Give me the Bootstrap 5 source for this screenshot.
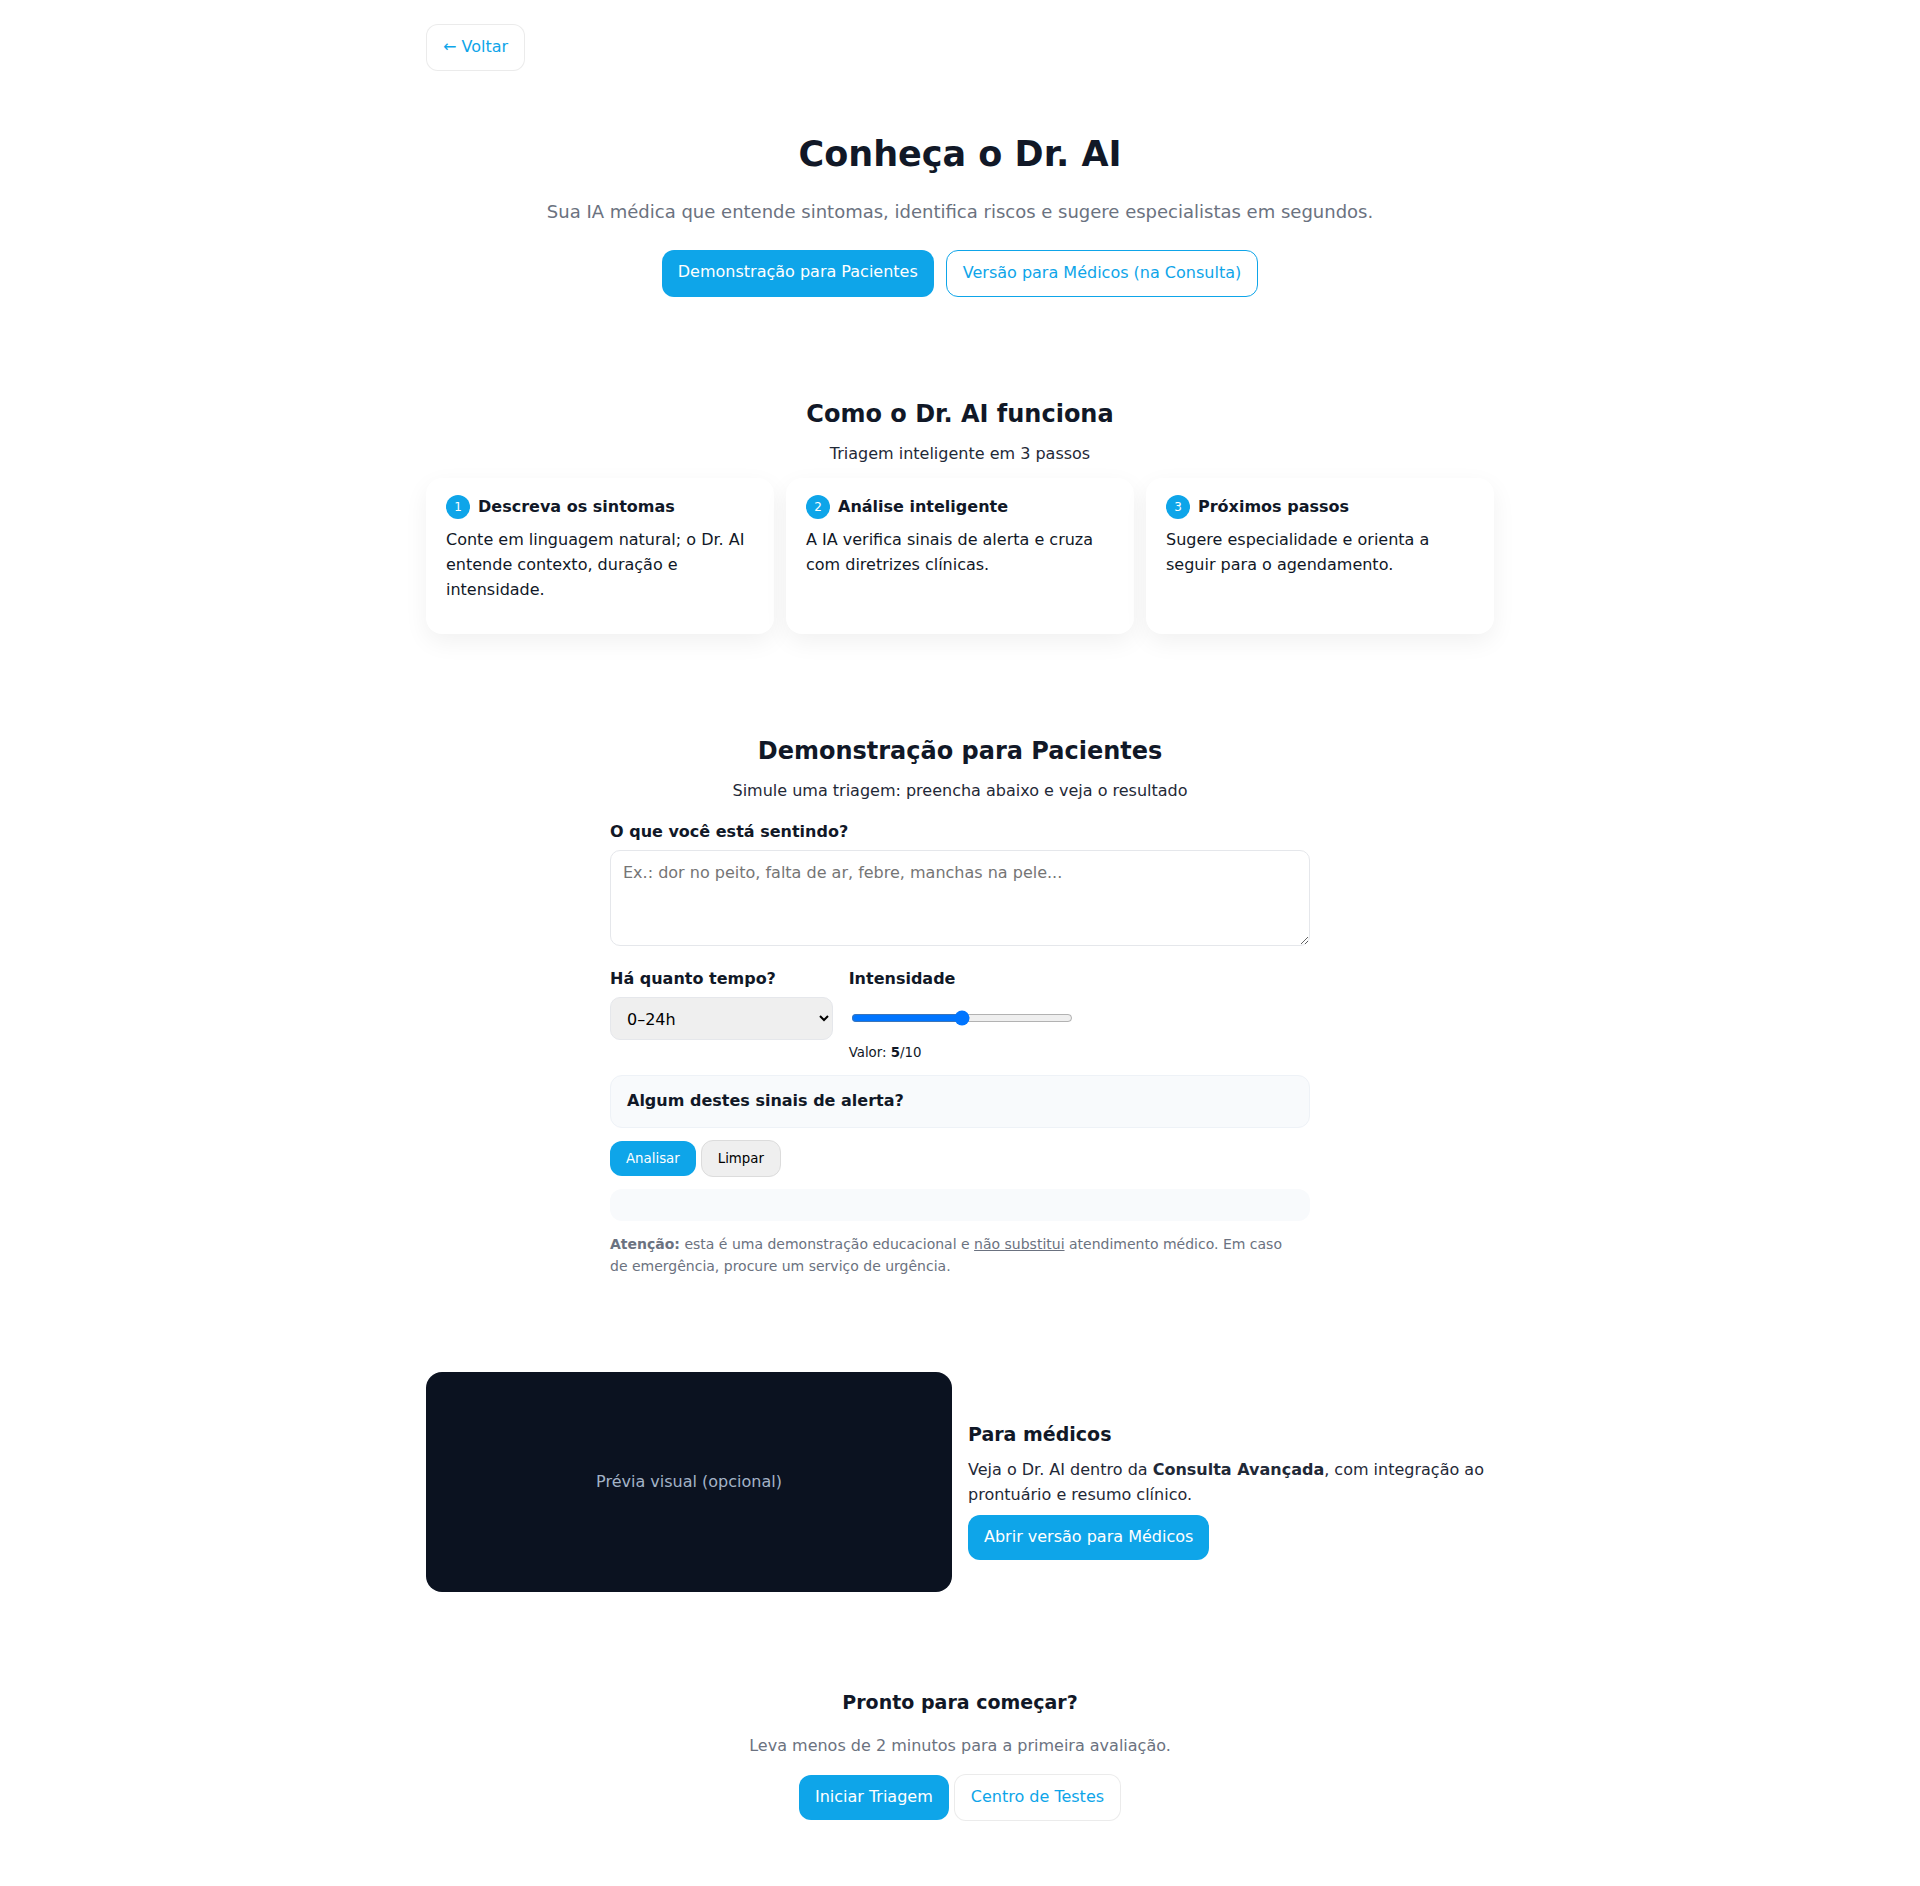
<!DOCTYPE html>
<html lang="pt-BR">
<head>
<meta charset="utf-8">
<meta name="viewport" content="width=device-width, initial-scale=1">
<title>Conheça o Dr. AI</title>
<link href="https://cdn.jsdelivr.net/npm/bootstrap@5.3.0/dist/css/bootstrap.min.css" rel="stylesheet">
<style>
:root{--brand:#0ea5e9;--ink:#111827;--muted:#6b7280;--line:#e5e7eb;--soft:#f8fafc}
body{font-family:"DejaVu Sans",sans-serif;font-size:16px;line-height:25px;color:var(--ink);background:#fff}
.page{max-width:1100px;padding:0 16px 16px}
.band{padding:48px 0}
h1{font-size:35px;line-height:55px;font-weight:700;margin:0 0 16px}
h2{font-size:24px;line-height:43px;font-weight:700;margin:0 0 5px}
h3{font-size:19px;line-height:29px;font-weight:700;margin:0 0 8px}
.tagline{font-size:18px;line-height:28px;color:var(--muted)}
.soft-text{color:#1f2937}
.section-sub{margin-bottom:12px}
.muted-text{color:var(--muted)}
.btn{--bs-btn-font-size:16px;--bs-btn-line-height:24px;--bs-btn-padding-x:16px;--bs-btn-padding-y:10px;--bs-btn-border-radius:12px;--bs-btn-font-weight:400;padding-bottom:11px}
.btn-brand{--bs-btn-color:#fff;--bs-btn-bg:var(--brand);--bs-btn-hover-color:#fff;--bs-btn-hover-bg:#0284c7;border:0}
.btn-line{--bs-btn-color:var(--brand);--bs-btn-bg:#fff;--bs-btn-border-color:rgba(0,0,0,.08)}
.btn-line-brand{--bs-btn-color:var(--brand);--bs-btn-border-color:var(--brand)}
.btn-compact{--bs-btn-font-size:smaller;--bs-btn-line-height:15px;padding-bottom:10px}
.btn-clear{--bs-btn-color:#000;--bs-btn-bg:#efefef;--bs-btn-border-color:#dcdcdc}
.btn-pair{gap:5px}
.hero-actions{gap:12px}
.step-grid{gap:12px;grid-template-columns:repeat(3,1fr)}
@media (max-width:767px){.step-grid{grid-template-columns:1fr}}
.step-card{border:0;border-radius:16px;padding:16px 20px 32px;box-shadow:0 8px 24px rgba(0,0,0,.06);color:var(--ink)}
.step-num{width:24px;height:24px;line-height:24px;border-radius:50%;background:var(--brand);color:#fff;font-size:12px}
.demo{max-width:700px;margin-top:16px}
.demo label{font-weight:700;margin-bottom:6px}
.demo .form-control,.demo .form-select{border:1px solid var(--line);border-radius:10px;color:#000}
.demo .form-control{padding:12px;height:96px;line-height:19px;margin-bottom:20px}
.demo .form-control::placeholder{color:#757575}
.demo .form-select{appearance:auto;background:#efefef;padding:11px 12px;line-height:19px;height:43px}
.demo input[type=range]{width:100%;margin:19px 2px 16px;height:16px}
.value-text{font-size:smaller;line-height:21px}
.alert-box{background:var(--soft);border:1px solid #eef2f7;border-radius:12px;padding:12px 16px 14px;margin:12px 0}
.result-box{background:var(--soft);border-radius:12px;height:32px;margin:12px 0}
.notice{font-size:14px;line-height:22px;color:var(--muted)}
.preview{background:#0b1220;border-radius:16px;height:220px;padding-bottom:2px;color:#a3b3c7}
#medicos{padding-top:47px}
</style>
</head>
<body>
<div class="container-fluid page">
  <nav class="pt-4 pb-2"><a class="btn btn-line" href="#">← Voltar</a></nav>

  <header class="band text-center">
    <h1>Conheça o Dr. AI</h1>
    <p class="tagline mb-4">Sua IA médica que entende sintomas, identifica riscos e sugere especialistas em segundos.</p>
    <div class="d-flex justify-content-center flex-wrap hero-actions">
      <a class="btn btn-brand" href="#demo">Demonstração para Pacientes</a>
      <a class="btn btn-line-brand" href="#medicos">Versão para Médicos (na Consulta)</a>
    </div>
  </header>

  <section class="band">
    <div class="text-center"><h2>Como o Dr. AI funciona</h2><p class="soft-text section-sub">Triagem inteligente em 3 passos</p></div>
    <div class="d-grid step-grid">
      <div class="card step-card"><div class="d-flex align-items-end gap-2 mb-2"><span class="step-num text-center">1</span><strong>Descreva os sintomas</strong></div><p class="mb-0">Conte em linguagem natural; o Dr. AI entende contexto, duração e intensidade.</p></div>
      <div class="card step-card"><div class="d-flex align-items-end gap-2 mb-2"><span class="step-num text-center">2</span><strong>Análise inteligente</strong></div><p class="mb-0">A IA verifica sinais de alerta e cruza com diretrizes clínicas.</p></div>
      <div class="card step-card"><div class="d-flex align-items-end gap-2 mb-2"><span class="step-num text-center">3</span><strong>Próximos passos</strong></div><p class="mb-0">Sugere especialidade e orienta a seguir para o agendamento.</p></div>
    </div>
  </section>

  <section class="band" id="demo">
    <div class="text-center"><h2>Demonstração para Pacientes</h2><p class="soft-text section-sub">Simule uma triagem: preencha abaixo e veja o resultado</p></div>
    <form class="demo mx-auto">
      <label class="d-block" for="sintomas">O que você está sentindo?</label>
      <textarea class="form-control" id="sintomas" placeholder="Ex.: dor no peito, falta de ar, febre, manchas na pele..."></textarea>
      <div class="row g-3">
        <div class="col-4"><label class="d-block" for="tempo">Há quanto tempo?</label>
          <select class="form-select" id="tempo"><option>0–24h</option><option>1–3 dias</option><option>Mais de 3 dias</option></select></div>
        <div class="col-4"><label class="d-block" for="forca">Intensidade</label>
          <input class="d-block" type="range" id="forca" min="0" max="10" value="5">
          <div class="value-text">Valor: <b>5</b>/10</div></div>
      </div>
      <div class="alert-box"><strong>Algum destes sinais de alerta?</strong></div>
      <div class="d-flex align-items-center btn-pair">
        <button class="btn btn-brand btn-compact" type="button">Analisar</button>
        <button class="btn btn-clear btn-compact" type="reset">Limpar</button>
      </div>
      <div class="result-box"></div>
      <p class="notice mb-0 pe-3"><strong>Atenção:</strong> esta é uma demonstração educacional e <u>não substitui</u> atendimento médico. Em caso de emergência, procure um serviço de urgência.</p>
    </form>
  </section>

  <section class="band" id="medicos">
    <div class="row row-cols-1 row-cols-md-2 g-3 align-items-center">
      <div class="col"><div class="preview d-flex align-items-center justify-content-center">Prévia visual (opcional)</div></div>
      <div class="col pt-3"><h3>Para médicos</h3><p class="soft-text mb-2">Veja o Dr. AI dentro da <strong>Consulta Avançada</strong>, com integração ao prontuário e resumo clínico.</p><a class="btn btn-brand" href="#">Abrir versão para Médicos</a></div>
    </div>
  </section>

  <section class="band text-center">
    <h3 class="mb-3">Pronto para começar?</h3>
    <p class="muted-text mb-3">Leva menos de 2 minutos para a primeira avaliação.</p>
    <div class="d-flex justify-content-center align-items-center btn-pair"><a class="btn btn-brand" href="#">Iniciar Triagem</a><a class="btn btn-line" href="#">Centro de Testes</a></div>
  </section>
</div>
<script src="https://cdn.jsdelivr.net/npm/bootstrap@5.3.0/dist/js/bootstrap.bundle.min.js"></script>
</body>
</html>
